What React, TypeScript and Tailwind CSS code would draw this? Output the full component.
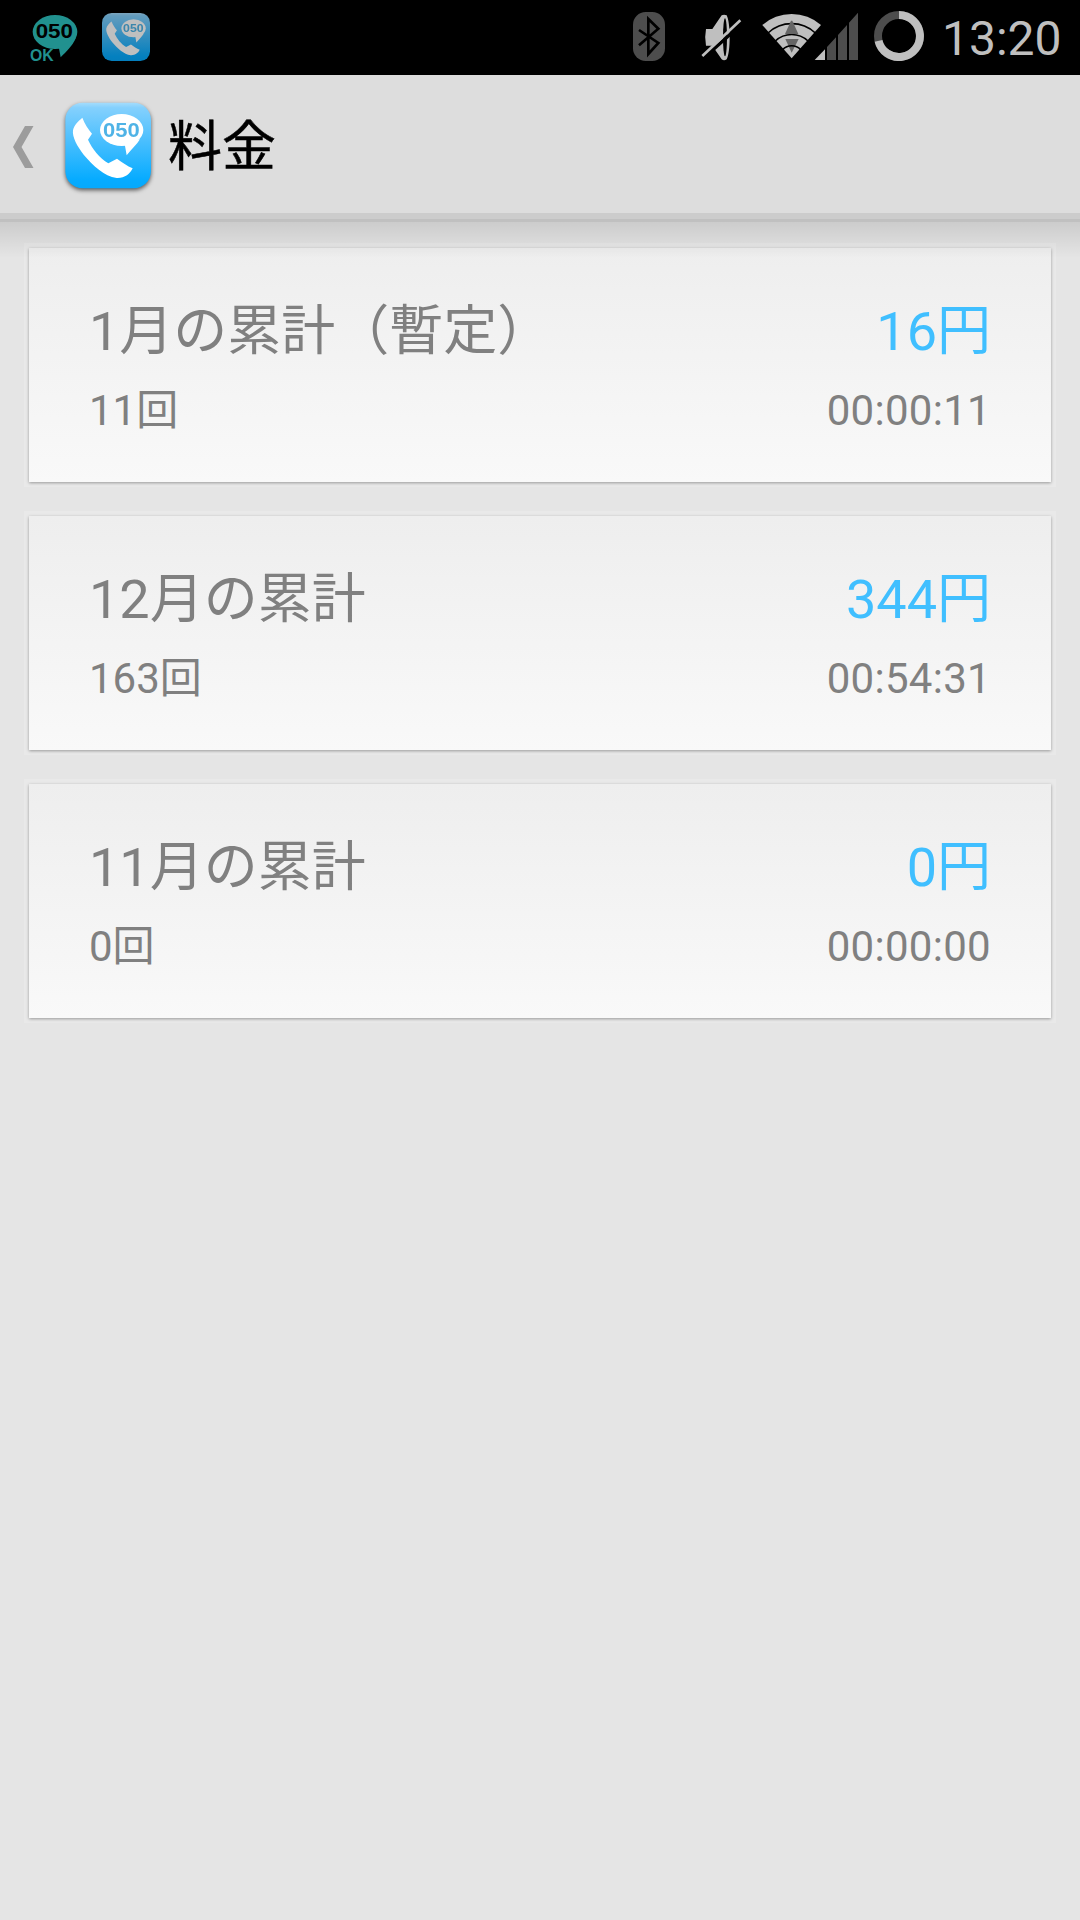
const records = [
  { title: "1月の累計", note: "（暫定）", yen: "16", count: "11", time: "00:00:11" },
  { title: "12月の累計", note: "", yen: "344", count: "163", time: "00:54:31" },
  { title: "11月の累計", note: "", yen: "0", count: "0", time: "00:00:00" },
];

function PhoneIcon({ id }: { id: string }) {
  return (
    <>
      <defs>
        <linearGradient id={id} x1="0" y1="0" x2="0" y2="1">
          <stop offset="0" stopColor="#a5dcfb" />
          <stop offset="0.06" stopColor="#84d0fd" />
          <stop offset="0.9" stopColor="#06abff" />
          <stop offset="1" stopColor="#06a9fc" />
        </linearGradient>
      </defs>
      <rect x="196" y="80" width="257" height="257" rx="52" fill={`url(#${id})`} />
      <path
        d="M247 125 C254 143 265 160 276 173 L264 191 C276 217 299 247 325 262 L351 248 C366 259 382 270 398 277 C390 294 374 307 350 306 C312 300 279 269 251 236 C232 212 216 183 219 163 C222 147 234 136 247 125Z"
        fill="#fff"
      />
      <ellipse cx="365" cy="162" rx="65" ry="48" fill="#fff" />
      <path d="M374 204 L380 238 C394 221 410 206 420 190Z" fill="#fff" />
      <text
        x="309"
        y="183"
        fontFamily="Liberation Sans, sans-serif"
        fontWeight="700"
        fontSize="60"
        textLength="110"
        lengthAdjust="spacingAndGlyphs"
        fill="#4fb3e6"
      >
        050
      </text>
    </>
  );
}

function StatusBar() {
  return (
    <div className="flex h-[75px] items-start bg-black text-[#bfbfbf]">
      <svg viewBox="84 0 156 225" className="ml-[28px] h-[75px] w-[52px] shrink-0">
        <ellipse cx="165" cy="96" rx="67" ry="51" fill="#21918f" />
        <path d="M176 140 L182 172 C200 154 216 140 227 115Z" fill="#21918f" />
        <text x="107" y="115" fontFamily="Liberation Sans, sans-serif" fontWeight="700" fontSize="58" textLength="112" lengthAdjust="spacingAndGlyphs" fill="#000">
          050
        </text>
        <text x="90" y="184" fontFamily="Liberation Sans, sans-serif" fontWeight="700" fontSize="49" textLength="71" lengthAdjust="spacingAndGlyphs" fill="#21918f">
          OK
        </text>
      </svg>
      <svg viewBox="196 80 257 257" className="mt-[13px] ml-[22px] size-12 shrink-0 opacity-75">
        <PhoneIcon id="small" />
      </svg>

      <svg viewBox="66 0 102 225" className="ml-[482px] h-[75px] w-[34px] shrink-0">
        <rect x="69" y="36" width="96" height="147" rx="38" fill="#4d4d4d" />
        <path d="M87 90 L145 129 L115 162 V57 L145 86 L87 136" fill="none" stroke="#000" strokeWidth="8" />
      </svg>
      <svg viewBox="270 0 126 225" className="ml-[34px] h-[75px] w-[42px] shrink-0">
        <path d="M288 87 H307 L335 46 Q342 42 350 46 C362 70 362 155 350 178 Q342 184 335 178 L307 137 H288 Q283 112 288 87Z" fill="#bfbfbf" />
        <ellipse cx="345" cy="112" rx="6" ry="57" fill="#000" />
        <path d="M277 178 L397 70" stroke="#000" strokeWidth="10" />
        <path d="M277 168 L391 61" stroke="#bfbfbf" strokeWidth="8" />
      </svg>
      <svg viewBox="456 0 180 225" className="ml-[20px] h-[75px] w-[60px] shrink-0">
        <path d="M545 175 L457 75 A133 133 0 0 1 633 75Z" fill="#bfbfbf" />
        <path d="M526 117 H566 L545 158Z" fill="#666" />
        <g fill="none" stroke="#000" strokeWidth="5">
          <path d="M474 99 A104 104 0 0 1 616 99" />
          <path d="M496 123 A71 71 0 0 1 594 123" />
          <path d="M518 149 A37 37 0 0 1 572 149" />
        </g>
        <path d="M543 62 H547 L565 102 H525Z" fill="#666" />
      </svg>
      <svg viewBox="612 0 135 225" className="-ml-[8px] h-[75px] w-[45px] shrink-0">
        <path d="M614 180 L645 148 V180Z" fill="#bfbfbf" />
        <path d="M651 180 V141 L678 112 V180Z M684 180 V105 L711 75 V180Z M717 180 V68 L744 38 V180Z" fill="#4d4d4d" />
      </svg>
      <svg viewBox="0 0 50 50" className="mt-[11px] ml-[15px] size-[50px] shrink-0">
        <circle cx="25" cy="25" r="21" fill="none" stroke="#4d4d4d" strokeWidth="8" />
        <path d="M25 4 A21 21 0 1 1 4.5 29.8" fill="none" stroke="#bfbfbf" strokeWidth="8" />
      </svg>
      <span className="mt-[9px] ml-[18px] font-['Roboto',sans-serif] text-[48px] leading-[60px]">13:20</span>
    </div>
  );
}

function ActionBar() {
  return (
    <header className="flex h-[147px] items-start border-b-[3px] border-[#c0c0c0] bg-[#ddd] shadow-[inset_0_-6px_0_#ccc]">
      <svg viewBox="0 0 60 72" className="mt-[36px] h-[72px] w-[60px] shrink-0">
        <path d="M13 36 L25 15 H33.5 L21.5 36 L33.5 57 H25Z" fill="#9c9c9c" />
      </svg>
      <svg viewBox="180 66 288 300" className="mt-[23px] h-[100px] w-[96px] shrink-0 drop-shadow-[0_2px_2px_rgba(0,0,0,0.6)]">
        <PhoneIcon id="large" />
      </svg>
      <h1 className="mt-[37px] ml-[12px] font-['Roboto','Noto_Sans_CJK_JP',sans-serif] text-[54px] leading-[72px] text-black [-webkit-text-stroke:0.5px_black]">
        料金
      </h1>
    </header>
  );
}

export default function App() {
  return (
    <div className="h-[1920px] w-[1080px] overflow-hidden bg-[#e5e5e5]">
      <StatusBar />
      <ActionBar />
      <main className="relative flex flex-col gap-[34px] px-[29px] pt-[26px] font-['Roboto','Noto_Sans_CJK_JP',sans-serif] text-[#808080]">
        {records.map((r) => (
          <section
            key={r.title}
            className="h-[234px] bg-linear-to-b from-[#eee] to-[#f9f9f9] px-[60px] pt-[48px] shadow-[0_1px_3px_rgba(0,0,0,0.35),0_0_0_5px_#e9e9e9]"
          >
            <div className="flex justify-between text-[54px] leading-[72px]">
              <h2>
                {r.title}
                {r.note}
              </h2>
              <p className="text-[#40bfff]">{r.yen}円</p>
            </div>
            <div className="mt-[15px] flex justify-between text-[42px] leading-[56px]">
              <p>{r.count}回</p>
              <p className="tracking-[0.3px]">{r.time}</p>
            </div>
          </section>
        ))}
        {/* shadow cast by the action bar */}
        <div className="pointer-events-none absolute inset-x-0 top-0 h-[36px] bg-linear-to-b from-black/11 to-transparent" />
      </main>
    </div>
  );
}
